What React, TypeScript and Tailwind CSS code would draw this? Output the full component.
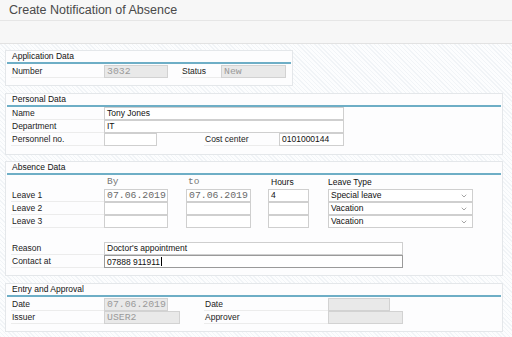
import { ChevronDown } from 'lucide-react';

const sans = { fontFamily: '"Liberation Sans", Arial, sans-serif' };

const Label = ({ text, w }: { text: string; w: string }) => (
    <div className={`${w} h-full shrink-0 border-b border-[#ececec] pl-[1px] text-[8.5px] leading-[12px] text-[#222]`}>
        {text}
    </div>
);

const Field = ({
    value = '',
    w,
    mono,
    readOnly,
    focused,
}: {
    value?: string;
    w: string;
    mono?: boolean;
    readOnly?: boolean;
    focused?: boolean;
}) => (
    <div
        className={`${w} h-[13px] shrink-0 border px-[2px] whitespace-nowrap ${
            readOnly ? 'border-[#d2d2d2] bg-[#e9e9e9]' : 'bg-white'
        } ${focused ? 'border-[#9a9a9a]' : readOnly ? '' : 'border-[#cfcfcf]'} ${
            mono
                ? `font-['Liberation_Mono'] text-[9.8px] leading-[11px] ${readOnly ? 'text-[#9a9a9a]' : 'text-[#6a6a6a]'}`
                : 'text-[8.5px] leading-[11px] text-[#111]'
        }`}
    >
        {value}
        {focused && <span className="ml-px inline-block h-[9px] w-px translate-y-[1px] bg-black" />}
    </div>
);

const Select = ({ value }: { value: string }) => (
    <div className="flex h-[13px] w-[145px] shrink-0 items-center justify-between border border-[#cfcfcf] bg-white pr-[4px] pl-[2px] text-[8.5px] leading-[11px] text-[#111]">
        <span>{value}</span>
        <ChevronDown className="h-[8px] w-[8px] text-[#777]" strokeWidth={2} />
    </div>
);

const Box = ({ title, w, children }: { title: string; w: string; children: React.ReactNode }) => (
    <div className={`${w} ml-[5px] border border-[#e4e7ea] bg-[#fdfdfe]`}>
        <div className="mx-px h-[13px] border-b-2 border-[#6eaec6] pl-[5px] text-[8.5px] leading-[11px] text-[#111]">
            {title}
        </div>
        {children}
    </div>
);

const Row = ({ children, className = '' }: { children: React.ReactNode; className?: string }) => (
    <div className={`flex h-[13px] items-stretch pl-[5px] ${className}`}>{children}</div>
);

export default function App() {
    return (
        <div className="h-[337px] w-[512px] overflow-hidden bg-white" style={sans}>
            {/* 제목 */}
            <div className="h-[21px] border-b border-[#e6e6e6] bg-[#f7f7f7] pl-[9px] text-[12.5px] leading-[20px] text-[#4a4a4a]">
                Create Notification of Absence
            </div>
            <div className="h-[23px] border-b border-[#e2e2e2] bg-[#f7f7f7]" />

            <div className="h-[293px] bg-[repeating-linear-gradient(45deg,#f1f4f7_0_1px,#fcfdfe_1px_3px)] pt-[6px]">
                {/* Application Data */}
                <Box title="Application Data" w="w-[288px]">
                    <Row className="mt-px">
                        <Label text="Number" w="w-[93px]" />
                        <Field value="3032" w="w-[64px]" mono readOnly />
                        <div className="w-[13px] shrink-0" />
                        <Label text="Status" w="w-[40px]" />
                        <Field value="New" w="w-[65px]" mono readOnly />
                    </Row>
                    <div className="h-[7px]" />
                </Box>

                {/* Personal Data */}
                <div className="h-[7px]" />
                <Box title="Personal Data" w="w-[498px]">
                    <Row>
                        <Label text="Name" w="w-[93px]" />
                        <Field value="Tony Jones" w="w-[240px]" />
                    </Row>
                    <Row>
                        <Label text="Department" w="w-[93px]" />
                        <Field value="IT" w="w-[240px]" />
                    </Row>
                    <Row>
                        <Label text="Personnel no." w="w-[93px]" />
                        <Field w="w-[53px]" />
                        <div className="w-[47px] shrink-0" />
                        <Label text="Cost center" w="w-[75px]" />
                        <Field value="0101000144" w="w-[65px]" />
                    </Row>
                    <div className="h-[8px]" />
                </Box>

                {/* Absence Data */}
                <div className="h-[6px]" />
                <Box title="Absence Data" w="w-[498px]">
                    <div className="flex h-[14px] items-center pl-[98px] text-[#777]">
                        <span className="w-[82px] pl-[3px] font-['Liberation_Mono'] text-[9.5px]">By</span>
                        <span className="w-[82px] pl-[2px] font-['Liberation_Mono'] text-[9.5px]">to</span>
                        <span className="w-[60px] pl-[3px] text-[8.5px] text-[#111]">Hours</span>
                        <span className="text-[8.5px] text-[#111]">Leave Type</span>
                    </div>
                    {[
                        ['Leave 1', '07.06.2019', '07.06.2019', '4', 'Special leave'],
                        ['Leave 2', '', '', '', 'Vacation'],
                        ['Leave 3', '', '', '', 'Vacation'],
                    ].map(([label, from, to, hours, type]) => (
                        <Row key={label}>
                            <Label text={label} w="w-[93px]" />
                            <Field value={from} w="w-[64px]" mono />
                            <div className="w-[18px] shrink-0" />
                            <Field value={to} w="w-[65px]" mono />
                            <div className="w-[17px] shrink-0" />
                            <Field value={hours} w="w-[41px]" />
                            <div className="w-[19px] shrink-0" />
                            <Select value={type} />
                        </Row>
                    ))}
                    <div className="h-[14px]" />
                    <Row>
                        <Label text="Reason" w="w-[93px]" />
                        <Field value="Doctor's appointment" w="w-[299px]" />
                    </Row>
                    <Row>
                        <Label text="Contact at" w="w-[93px]" />
                        <Field value="07888 911911" w="w-[299px]" focused />
                    </Row>
                    <div className="h-[7px]" />
                </Box>

                {/* Entry and Approval */}
                <div className="h-[7px]" />
                <Box title="Entry and Approval" w="w-[498px]">
                    <Row className="mt-px">
                        <Label text="Date" w="w-[93px]" />
                        <Field value="07.06.2019" w="w-[64px]" mono readOnly />
                        <div className="w-[36px] shrink-0" />
                        <Label text="Date" w="w-[124px]" />
                        <Field w="w-[62px]" readOnly />
                    </Row>
                    <Row>
                        <Label text="Issuer" w="w-[93px]" />
                        <Field value="USER2" w="w-[76px]" mono readOnly />
                        <div className="w-[24px] shrink-0" />
                        <Label text="Approver" w="w-[124px]" />
                        <Field w="w-[75px]" readOnly />
                    </Row>
                    <div className="h-[7px]" />
                </Box>
            </div>
        </div>
    );
}
